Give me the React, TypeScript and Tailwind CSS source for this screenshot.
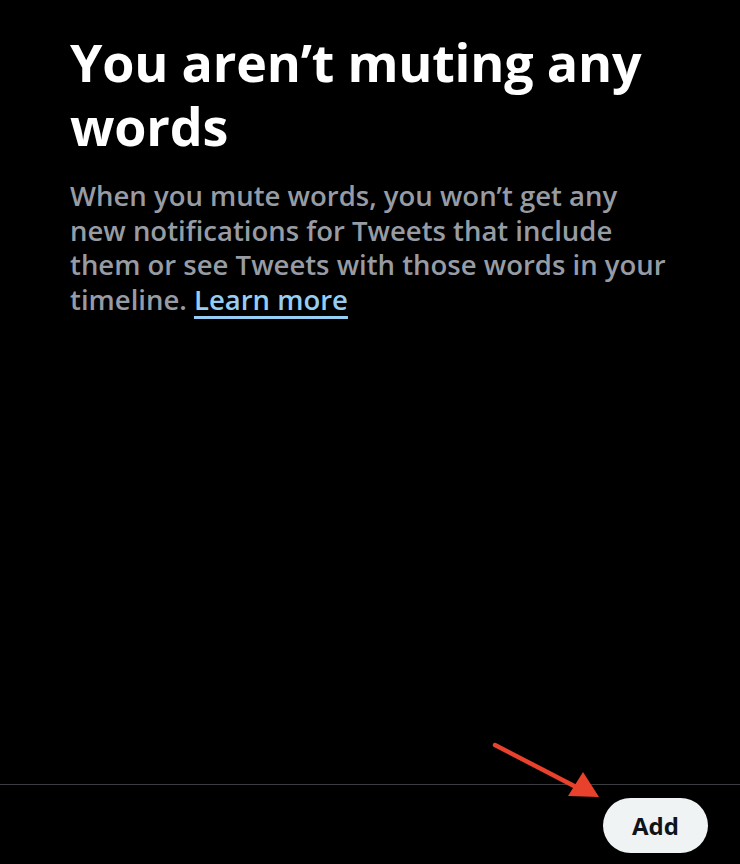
import React from "react";

export default function App() {
  return (
    <div className="relative flex h-[864px] w-[740px] flex-col overflow-hidden bg-black font-['Open_Sans',sans-serif]">
      <div className="pl-[70px] pr-[30px] pt-[30px]">
        <h1 className="text-[52px] font-bold leading-[64px] tracking-[-0.2px] text-white">
          You aren’t muting any
          <br />
          words
        </h1>
        <p className="mt-[21px] text-[27.5px] font-semibold leading-[34.5px] text-[#979ca4]">
          When you mute words, you won’t get any
          <br />
          new notifications for Tweets that include
          <br />
          them or see Tweets with those words in your
          <br />
          timeline.{" "}
          <a href="#" className="text-[#95cdf5] underline decoration-[3px] underline-offset-[6px]">
            Learn more
          </a>
        </p>
      </div>

      <div className="flex-1" />

      {/* bottom bar */}
      <div className="flex justify-end border-t border-[#3b3d40] pb-[11px] pr-[32px] pt-[13px]">
        <button className="flex h-[55px] w-[105px] items-center justify-center rounded-full bg-[#eff3f4] text-[24px] font-bold text-[#0f1419]">
          Add
        </button>
      </div>

      {/* callout arrow pointing at the Add button */}
      <svg className="pointer-events-none absolute left-0 top-0" width="740" height="864" viewBox="0 0 740 864">
        <line x1="495" y1="745" x2="578" y2="788" stroke="#e8412c" strokeWidth="4.5" strokeLinecap="round" />
        <polygon points="599,797 568,796 583,772" fill="#e8412c" />
      </svg>
    </div>
  );
}
